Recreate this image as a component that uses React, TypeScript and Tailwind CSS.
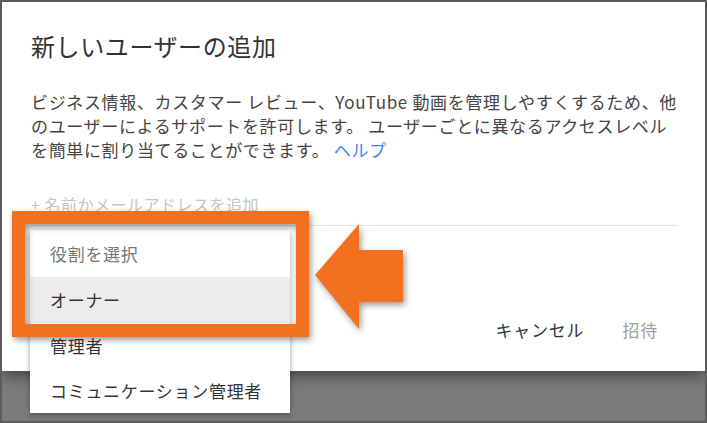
const font = { fontFamily: '"Noto Sans CJK JP", "Noto Sans", sans-serif' };

const roles = ["オーナー", "管理者", "コミュニケーション管理者"];

function RoleMenu() {
  return (
    <div className="absolute left-[28px] top-[228px] w-[260px] bg-white shadow-[0_2px_6px_rgba(0,0,0,0.35)] tracking-[0.7px]">
      <div className="h-[47px] pl-5 flex items-center text-[17px] text-[#757575]">役割を選択</div>
      {roles.map((r, i) => (
        <div
          key={r}
          className={
            i === 0
              ? "h-[46px] pl-5 flex items-center text-[17px] text-[#333] bg-[#ececec]"
              : "h-[45px] pl-5 flex items-center text-[17px] text-[#333]"
          }
        >
          {r}
        </div>
      ))}
    </div>
  );
}

function Arrow() {
  return (
    <svg
      className="absolute left-[310px] top-[218px] drop-shadow-[2px_3px_3px_rgba(0,0,0,0.4)]"
      width="100"
      height="118"
      viewBox="0 0 100 118"
    >
      <polygon points="3,55 47,4 47,30 91,30 91,82 47,82 47,109" fill="#f37021" />
    </svg>
  );
}

export default function App() {
  return (
    <div
      className="relative w-[707px] h-[423px] overflow-hidden border-2 border-[#5c5c5c] bg-[#7b7b7b]"
      style={font}
    >
      <div className="h-[369px] bg-white shadow-[0_5px_14px_rgba(0,0,0,0.45)] pl-[29px] pr-[27px] pt-[28px]">
        <h1 className="text-[24px] leading-[32px] tracking-[0.6px] text-[#333]">新しいユーザーの追加</h1>
        <p className="mt-[28px] text-[17px] leading-[24px] tracking-[0.65px] text-[#444] whitespace-nowrap">
          ビジネス情報、カスタマー レビュー、YouTube 動画を管理しやすくするため、他
          <br />
          のユーザーによるサポートを許可します。 ユーザーごとに異なるアクセスレベル
          <br />
          を簡単に割り当てることができます。 <span className="text-[#4285f4]">ヘルプ</span>
        </p>
        <div className="mt-[30px] pb-[9px] border-b border-[#e5e5e5] text-[16px] leading-[24px] tracking-[0.5px] text-[#c6c6c6]">
          + 名前かメールアドレスを追加
        </div>
        <div className="mt-[92px] pr-[20px] flex justify-end gap-[38px] text-[17px] leading-[24px] tracking-[0.8px]">
          <span className="text-[#333]">キャンセル</span>
          <span className="text-[#a0a0a0]">招待</span>
        </div>
      </div>

      <RoleMenu />

      <div className="absolute left-[10px] top-[209px] w-[297px] h-[126px] border-[13px] border-[#f37021] drop-shadow-[2px_3px_3px_rgba(0,0,0,0.4)]" />
      <Arrow />
    </div>
  );
}
